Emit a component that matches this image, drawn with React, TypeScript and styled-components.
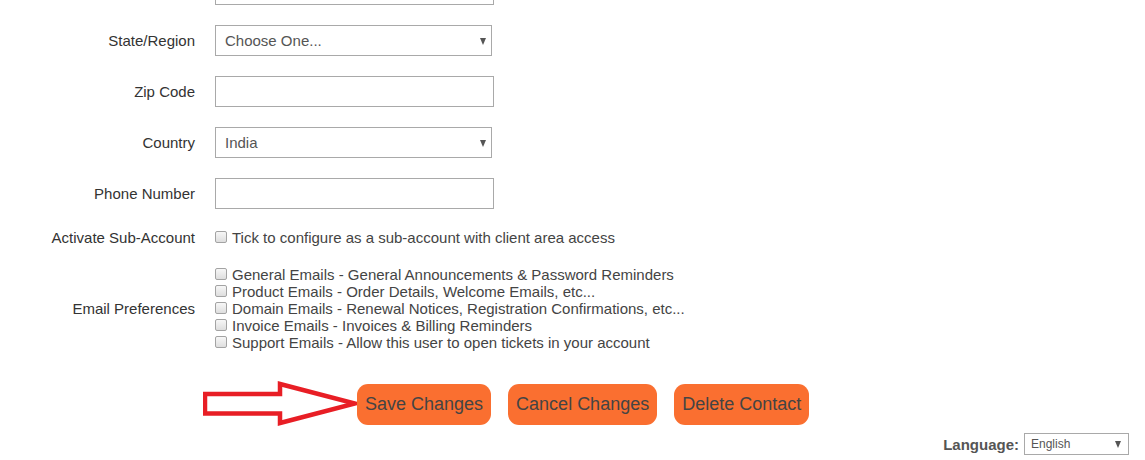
import React from 'react';
import styled, {createGlobalStyle} from 'styled-components';

const GlobalStyle = createGlobalStyle`
  html, body {
    margin: 0;
    padding: 0;
    background: #ffffff;
    overflow: hidden;
  }
  body {
    font-family: 'Liberation Sans', Arial, sans-serif;
    font-size: 15px;
    color: #333;
  }
`;

const emailPrefs = [
  'General Emails - General Announcements & Password Reminders',
  'Product Emails - Order Details, Welcome Emails, etc...',
  'Domain Emails - Renewal Notices, Registration Confirmations, etc...',
  'Invoice Emails - Invoices & Billing Reminders',
  'Support Emails - Allow this user to open tickets in your account',
];

const PointerArrow = (props: React.SVGProps<SVGSVGElement>) => (
  <svg width={154} height={50} viewBox="0 0 154 50" fill="none" {...props}>
    <polygon
      points="2,15 77,15 77,5 152,24.5 77,44 77,34.5 2,34.5"
      stroke="#e81e25"
      strokeWidth={4.5}
      strokeLinejoin="miter"
      fill="white"
    />
  </svg>
);

export default function App() {
  return (
    <Page>
      <GlobalStyle />
      <Form>
        {/* row scrolled off the top: only its field's lower edge shows */}
        <Label />
        <TextInput type="text" />

        <Label>State/Region</Label>
        <SelectWrap>
          <Select defaultValue="">
            <option value="">Choose One...</option>
          </Select>
        </SelectWrap>

        <Label>Zip Code</Label>
        <TextInput type="text" />

        <Label>Country</Label>
        <SelectWrap>
          <Select defaultValue="IN">
            <option value="IN">India</option>
          </Select>
        </SelectWrap>

        <Label>Phone Number</Label>
        <TextInput type="text" />

        <Label>Activate Sub-Account</Label>
        <CheckList>
          <CheckRow>
            <Check type="checkbox" />
            Tick to configure as a sub-account with client area access
          </CheckRow>
        </CheckList>

        <Label>Email Preferences</Label>
        <CheckList>
          {emailPrefs.map((text) => (
            <CheckRow key={text}>
              <Check type="checkbox" />
              {text}
            </CheckRow>
          ))}
        </CheckList>
      </Form>

      <Actions>
        <PointerArrow />
        <Buttons>
          <OrangeButton>Save Changes</OrangeButton>
          <OrangeButton>Cancel Changes</OrangeButton>
          <OrangeButton>Delete Contact</OrangeButton>
        </Buttons>
      </Actions>

      <LanguageBar>
        <LanguageLabel>Language:</LanguageLabel>
        <SelectWrap small>
          <Select small defaultValue="en">
            <option value="en">English</option>
          </Select>
        </SelectWrap>
      </LanguageBar>
    </Page>
  );
}

const Page = styled.div`
  width: 1145px;
  height: 460px;
  display: flex;
  flex-direction: column;
`;

const Form = styled.div`
  margin-top: -26px;
  display: grid;
  grid-template-columns: 195px 1fr;
  column-gap: 20px;
  row-gap: 20px;
  align-items: center;
`;

const Label = styled.label`
  text-align: right;
  font-size: 15px;
  line-height: 17px;
  color: #333;
`;

const TextInput = styled.input`
  box-sizing: border-box;
  width: 279px;
  height: 31px;
  margin: 0;
  border: 1px solid #a9a9a9;
  background: #fff;
  font-family: inherit;
  font-size: 15px;
  padding: 0 9px;
  outline: none;
`;

const SelectWrap = styled.div<{small?: boolean}>`
  position: relative;
  width: ${({small}) => (small ? '105px' : '277px')};
  height: ${({small}) => (small ? '22px' : '31px')};
  &::after {
    content: '';
    position: absolute;
    right: ${({small}) => (small ? '8px' : '6px')};
    top: 50%;
    margin-top: -3px;
    border-left: 3.5px solid transparent;
    border-right: 3.5px solid transparent;
    border-top: 7px solid #555;
    pointer-events: none;
  }
`;

const Select = styled.select<{small?: boolean}>`
  appearance: none;
  box-sizing: border-box;
  width: 100%;
  height: 100%;
  margin: 0;
  border: 1px solid #a9a9a9;
  border-radius: 0;
  background: #fff;
  font-family: inherit;
  font-size: ${({small}) => (small ? '12px' : '15px')};
  color: #555;
  padding: ${({small}) => (small ? '0 0 0 6px' : '0 0 0 9px')};
  outline: none;
`;

const CheckList = styled.div`
  display: flex;
  flex-direction: column;
`;

const CheckRow = styled.label`
  display: flex;
  align-items: center;
  height: 17px;
  font-size: 15px;
  color: #444;
  white-space: nowrap;
`;

const Check = styled.input`
  appearance: none;
  box-sizing: border-box;
  width: 12px;
  height: 12px;
  margin: 0 5px 1px 0;
  border: 1px solid #a3a3a3;
  border-radius: 2px;
  background: linear-gradient(#f7f7f7, #dedede);
`;

const Actions = styled.div`
  margin-top: 28px;
  padding-left: 203px;
  display: flex;
  align-items: center;
`;

const Buttons = styled.div`
  display: flex;
  gap: 17px;
`;

const OrangeButton = styled.button`
  height: 41px;
  padding: 0 8px;
  border: none;
  border-radius: 11px;
  background-color: #fa6f30;
  color: #444;
  font-family: 'Liberation Sans', Arial, sans-serif;
  font-size: 18px;
  cursor: pointer;
`;

const LanguageBar = styled.div`
  margin-top: 4px;
  padding-right: 16px;
  display: flex;
  justify-content: flex-end;
  align-items: center;
  gap: 5px;
`;

const LanguageLabel = styled.span`
  font-weight: bold;
  font-size: 15px;
  color: #555;
`;
